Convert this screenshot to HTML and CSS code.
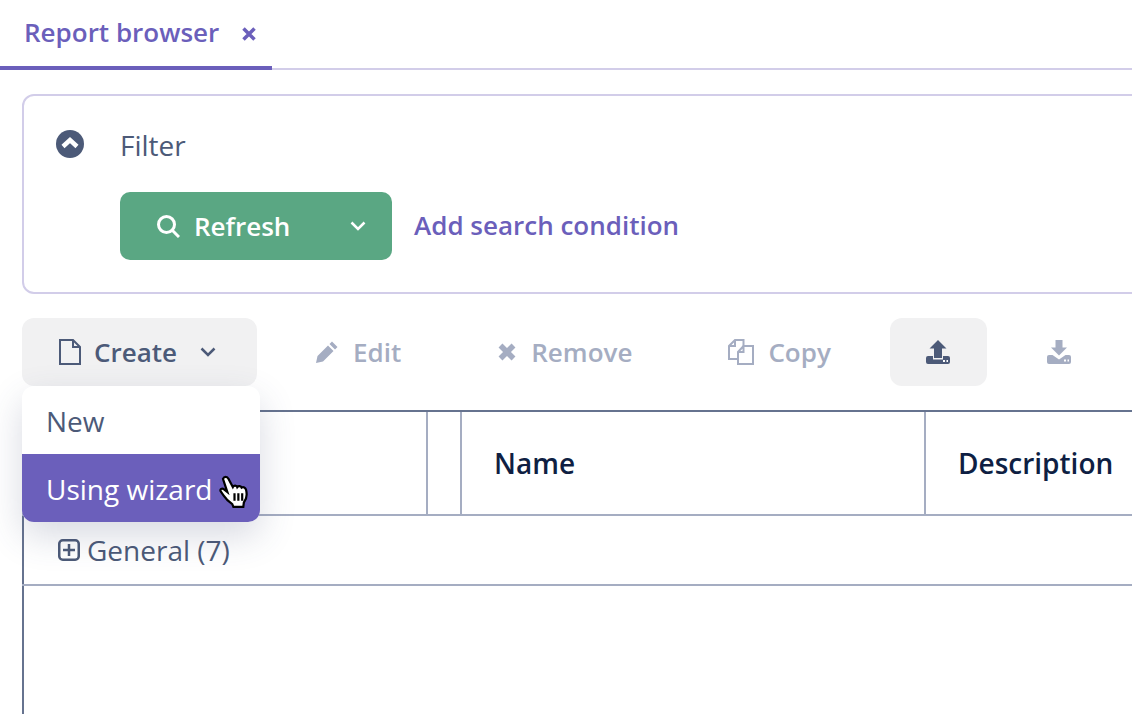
FILE: index.html
```html
<!DOCTYPE html>
<html lang="en">
<head>
  <meta charset="UTF-8">
  <title>Report browser</title>
  <link rel="stylesheet" href="styles.css">
</head>
<body>
  <div class="tabs">
    <div class="tab">
      <span>Report browser</span>
      <svg class="tab-close" viewBox="0 0 14 14"><path d="M1.5 1.5l11 11M12.5 1.5l-11 11"/></svg>
    </div>
  </div>

  <div class="content">
    <div class="filter">
      <div class="filter-head">
        <svg class="collapse" viewBox="0 0 28 28"><circle cx="14" cy="14" r="14"/><path d="M7 16.5L14 10l7 6.5"/></svg>
        <span class="filter-title">Filter</span>
      </div>
      <div class="filter-actions">
        <button class="refresh">
          <svg class="search" viewBox="0 0 24 24"><circle cx="10.5" cy="10.5" r="8"/><path d="M16.5 16.5L23 23"/></svg>
          <span class="refresh-label">Refresh</span>
          <svg class="chev chev-white" viewBox="0 0 16 10"><path d="M1.5 1.5L8 8l6.500-6.500"/></svg>
        </button>
        <a class="add-link">Add search condition</a>
      </div>
    </div>

    <div class="toolbar">
      <div class="create-wrap">
        <button class="tool tool-create">
          <svg class="ic-file" viewBox="0 0 24 26"><path d="M2 1h13l7 7v17H2zM15 1v7h7"/></svg>
          <span>Create</span>
          <svg class="chev" viewBox="0 0 16 10"><path d="M1.5 1.5L8 8l6.500-6.500"/></svg>
        </button>
        <div class="menu">
          <div class="menu-item">New</div>
          <div class="menu-item menu-item-active">
            Using wizard
            <svg class="hand" viewBox="0 0 28 30">
              <path d="M3.5 3.500c1-2.500 4-2.500 5 0l4 7.500c1-2 3.500-1.500 4 0 1-1.500 3.500-1 4 .5 1.500-1 3.500 0 4 2 1 4 .5 8.500-2 11.500l-.5 4H13l-1-2.500c-3-2-6-5-8-8l-2.500-3.500c-1-2 1-3.500 3-2l3 2.500z"/>
              <path class="hand-lines" d="M14 16.500v7M17.500 16.500v7M21 16.500v7"/>
            </svg>
          </div>
        </div>
      </div>
      <button class="tool tool-edit muted">
        <svg class="ic-solid" viewBox="0 0 24 24"><path d="M17 1.500l5.500 5.500-2.500 2.500L14.500 4zM13 5.500l5.500 5.500L8 21.500l-7 1.500 1.500-7z"/></svg>
        <span>Edit</span>
      </button>
      <button class="tool tool-remove muted">
        <svg class="ic-x" viewBox="0 0 18 18"><path d="M2.500 2.500l13 13M15.500 2.500l-13 13"/></svg>
        <span>Remove</span>
      </button>
      <button class="tool tool-copy muted">
        <svg class="ic-copy" viewBox="0 0 26 26"><path d="M15.500 7V1H7L1 7v13h9M7 1v6H1"/><path d="M10 13l5.500-6H25v18H10zM10 13h5.500V7"/></svg>
        <span>Copy</span>
      </button>
      <button class="tool tool-icon tool-upload">
        <svg class="ic-solid" viewBox="0 0 24 24"><path d="M12 0l8.500 8.500H16V18H8V8.500H3.500zM2 16h5v3.500h10V16h5a2 2 0 0 1 2 2v4a2 2 0 0 1-2 2H2a2 2 0 0 1-2-2v-4a2 2 0 0 1 2-2z"/><path class="dots" d="M17 21h2M20.500 21h1.500"/></svg>
      </button>
      <button class="tool tool-icon muted">
        <svg class="ic-solid" viewBox="0 0 24 24"><path d="M8.500 0h7v7.500H20l-8 8-8-8h4.500zM2 15h3.500l6.500 4.500 6.500-4.500H22a2 2 0 0 1 2 2v5a2 2 0 0 1-2 2H2a2 2 0 0 1-2-2v-5a2 2 0 0 1 2-2z"/><path class="dots" d="M17 20.500h2M20.500 20.500h1.500"/></svg>
      </button>
    </div>

    <table class="grid">
      <thead>
        <tr>
          <th class="col-group"></th>
          <th class="col-mark"></th>
          <th class="col-name">Name</th>
          <th>Description</th>
        </tr>
      </thead>
      <tbody>
        <tr class="group-row">
          <td colspan="4">
            <span class="group-label">
              <svg class="ic-plus" viewBox="0 0 22 22"><rect x="1.25" y="1.25" width="19.500" height="19.500" rx="3.500"/><path d="M11 5v12M5 11h12"/></svg>
              General (7)
            </span>
          </td>
        </tr>
      </tbody>
    </table>
  </div>
</body>
</html>
```

FILE: styles.css
```css
html, body {
  height: 100%;
}
body {
  margin: 0;
  overflow: hidden;
  background-color: #fff;
  font-family: "Open Sans", sans-serif;
  font-size: 26px;
  color: #4c5a78;
}
button {
  border: none;
  font-family: inherit;
  font-size: 26px;
  cursor: pointer;
}
svg {
  display: block;
  flex: none;
}

.tabs {
  height: 68px;
  border-bottom: 2px solid #d2cde9;
}
.tab {
  width: 272px;
  height: 70px;
  box-sizing: border-box;
  border-bottom: 4px solid #6b5fbb;
  display: flex;
  align-items: center;
  padding-left: 24px;
  font-weight: 600;
  color: #6b5fbb;
}
.tab span {
  position: relative;
  top: -1px;
}
.tab-close {
  width: 14px;
  height: 14px;
  margin: 2px 0 0 23px;
  fill: none;
  stroke: #6b5fbb;
  stroke-width: 3.5;
}

.content {
  padding: 24px 0 0 22px;
  width: 1180px;
}

.filter {
  height: 200px;
  box-sizing: border-box;
  border: 2px solid #d2cde9;
  border-radius: 12px;
  padding: 34px 0 0 32px;
}
.filter-head {
  display: flex;
  align-items: center;
  height: 28px;
}
.collapse {
  width: 28px;
  height: 28px;
}
.collapse circle {
  fill: #4c5a78;
}
.collapse path {
  fill: none;
  stroke: #fff;
  stroke-width: 4.5;
}
.filter-title {
  margin: 2px 0 0 36px;
  font-size: 28px;
}
.filter-actions {
  display: flex;
  align-items: center;
  margin: 34px 0 0 64px;
}
.refresh {
  width: 272px;
  height: 68px;
  display: flex;
  align-items: center;
  padding: 0 26px 0 36px;
  background-color: #5aa783;
  border-radius: 10px;
  color: #fff;
  font-weight: 600;
}
.search {
  width: 24px;
  height: 24px;
  fill: none;
  stroke: #fff;
  stroke-width: 3;
}
.refresh-label {
  margin-left: 14px;
  flex: 1;
  text-align: left;
}
.chev {
  width: 16px;
  height: 10px;
  fill: none;
  stroke: #4c5a78;
  stroke-width: 2.5;
}
.chev-white {
  stroke: #fff;
}
.add-link {
  margin: -2px 0 0 22px;
  font-weight: 600;
  color: #6b5fbb;
}

.toolbar {
  display: flex;
  margin-top: 24px;
  height: 68px;
}
.create-wrap {
  position: relative;
}
.tool {
  height: 68px;
  display: flex;
  align-items: center;
  background: none;
  border-radius: 12px;
  font-weight: 600;
  color: #4c5a78;
  padding: 0;
}
.tool.muted {
  color: #a5adc2;
}
.tool-create {
  width: 235px;
  padding-left: 36px;
  background-color: #f1f1f2;
}
.tool-create .chev {
  margin-left: 23px;
}
.ic-file {
  width: 24px;
  height: 26px;
  margin-right: 12px;
  fill: none;
  stroke: #4c5a78;
  stroke-width: 2;
}
.tool-edit {
  margin-left: 58px;
}
.tool-remove {
  margin-left: 97px;
}
.tool-copy {
  margin-left: 96px;
}
.tool-edit span, .tool-copy span {
  margin-left: 14px;
}
.tool-remove span {
  margin-left: 15px;
}
.ic-solid {
  width: 24px;
  height: 24px;
  fill: currentColor;
}
.ic-solid .dots {
  fill: none;
  stroke: #fff;
  stroke-width: 2;
}
.ic-x {
  width: 18px;
  height: 18px;
  fill: none;
  stroke: currentColor;
  stroke-width: 5.5;
}
.ic-copy {
  width: 26px;
  height: 26px;
  fill: none;
  stroke: currentColor;
  stroke-width: 2;
}
.tool-icon {
  width: 97px;
  justify-content: center;
}
.tool-upload {
  margin-left: 59px;
  background-color: #f1f1f2;
}
.tool-upload + .tool-icon {
  margin-left: 24px;
}

.menu {
  position: absolute;
  left: 0;
  top: 68px;
  width: 238px;
  background-color: #fff;
  border-radius: 12px;
  box-shadow: 0 14px 36px rgba(60, 70, 110, 0.2);
  overflow: hidden;
  z-index: 2;
  font-size: 28px;
}
.menu-item {
  height: 68px;
  line-height: 70px;
  padding-left: 24px;
  white-space: nowrap;
}
.menu-item-active {
  position: relative;
  background-color: #6b5fbb;
  color: #fff;
}
.hand {
  position: absolute;
  left: 197px;
  top: 21px;
  width: 31px;
  height: 33px;
  fill: #fff;
  stroke: #000;
  stroke-width: 2;
}
.hand-lines {
  fill: none;
}

.grid {
  width: 1110px;
  margin-top: 24px;
  border-collapse: collapse;
  table-layout: fixed;
}
.grid th {
  height: 102px;
  padding: 0 0 0 32px;
  text-align: left;
  font-size: 28px;
  font-weight: 600;
  color: #0f1f43;
  border-top: 2px solid #66738f;
  border-bottom: 2px solid #a5adc2;
  border-left: 2px solid #a5adc2;
}
.grid th.col-group {
  width: 370px;
  border-left: 2px solid #66738f;
}
.grid th.col-mark {
  width: 32px;
  padding: 0;
}
.grid th.col-name {
  width: 430px;
}
.group-row td {
  height: 68px;
  padding: 0 0 0 34px;
  border-bottom: 2px solid #a5adc2;
  border-left: 2px solid #66738f;
  font-size: 28px;
}
.group-label {
  display: flex;
  align-items: center;
  gap: 7px;
}
.ic-plus {
  width: 22px;
  height: 22px;
  fill: none;
  stroke: #4c5a78;
  stroke-width: 2.5;
}
.content::after {
  content: "";
  display: block;
  width: 2px;
  height: 130px;
  background-color: #66738f;
}
```
